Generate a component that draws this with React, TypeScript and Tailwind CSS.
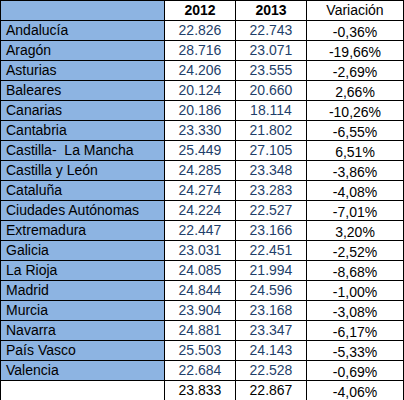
import React from "react";

const rows: [string, string, string, string][] = [
  ["Andalucía", "22.826", "22.743", "-0,36%"],
  ["Aragón", "28.716", "23.071", "-19,66%"],
  ["Asturias", "24.206", "23.555", "-2,69%"],
  ["Baleares", "20.124", "20.660", "2,66%"],
  ["Canarias", "20.186", "18.114", "-10,26%"],
  ["Cantabria", "23.330", "21.802", "-6,55%"],
  ["Castilla-  La Mancha", "25.449", "27.105", "6,51%"],
  ["Castilla y León", "24.285", "23.348", "-3,86%"],
  ["Cataluña", "24.274", "23.283", "-4,08%"],
  ["Ciudades Autónomas", "24.224", "22.527", "-7,01%"],
  ["Extremadura", "22.447", "23.166", "3,20%"],
  ["Galicia", "23.031", "22.451", "-2,52%"],
  ["La Rioja", "24.085", "21.994", "-8,68%"],
  ["Madrid", "24.844", "24.596", "-1,00%"],
  ["Murcia", "23.904", "23.168", "-3,08%"],
  ["Navarra", "24.881", "23.347", "-6,17%"],
  ["País Vasco", "25.503", "24.143", "-5,33%"],
  ["Valencia", "22.684", "22.528", "-0,69%"],
];

export default function App() {
  return (
    <div
      className="w-[404px] h-[400px] overflow-hidden bg-white text-[14px] text-black"
      style={{ fontFamily: '"Liberation Sans", Arial, sans-serif' }}
    >
      <div className="grid grid-cols-[163px_70px_70px_96px] auto-rows-[19px] gap-px bg-black p-px">
        <div className="bg-[#8db4e2]" />
        <div className="bg-white flex items-center justify-center font-bold leading-[19px]">2012</div>
        <div className="bg-white flex items-center justify-center font-bold leading-[19px]">2013</div>
        <div className="bg-white flex items-center justify-center leading-[19px]">Variación</div>
        {rows.map((r) => (
          <React.Fragment key={r[0]}>
            <div className="bg-[#8db4e2] pl-[5px] leading-[19px] whitespace-pre">{r[0]}</div>
            <div className="bg-white text-center leading-[19px] text-[#1f3f6a]">{r[1]}</div>
            <div className="bg-white text-center leading-[19px] text-[#1f3f6a]">{r[2]}</div>
            <div className="bg-white text-center leading-[19px] pt-[2px]">{r[3]}</div>
          </React.Fragment>
        ))}
        <div className="bg-white" />
        <div className="bg-white text-center leading-[19px]">23.833</div>
        <div className="bg-white text-center leading-[19px]">22.867</div>
        <div className="bg-white text-center leading-[19px] pt-[2px]">-4,06%</div>
      </div>
    </div>
  );
}
